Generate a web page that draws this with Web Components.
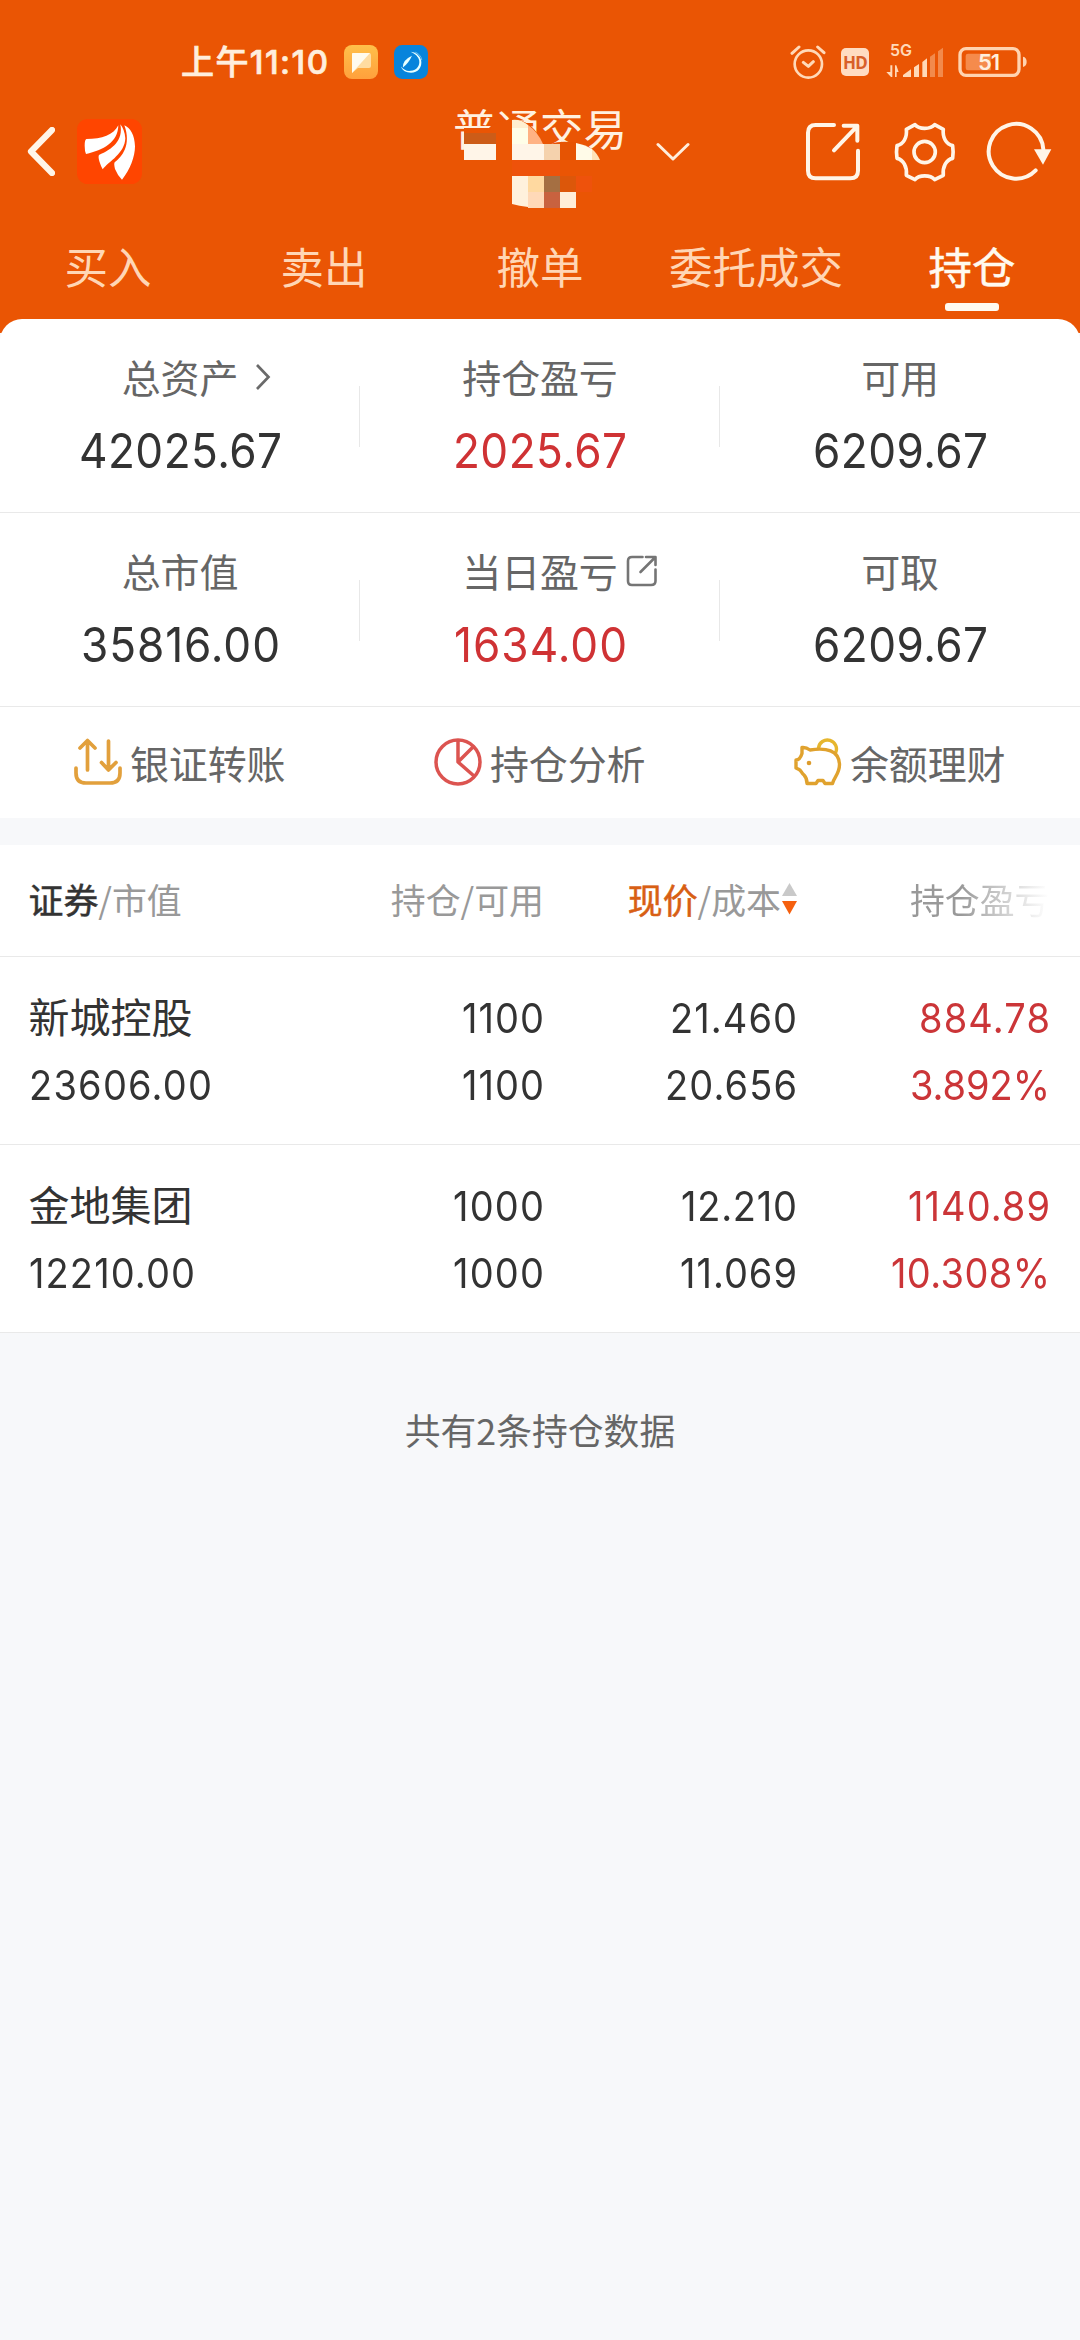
<!DOCTYPE html>
<html lang="zh-CN">
<head>
<meta charset="utf-8">
<title>普通交易 - 持仓</title>
<style>
html,body{margin:0;padding:0}
body{width:1080px;height:2340px;overflow:hidden;background:#f7f8fa;font-family:"Noto Sans CJK SC","Noto Sans",sans-serif;color:#333}
</style>
</head>
<body>
<trade-page></trade-page>
<script>
const ICONS = {
  back: ['0 0 28 49', '<path d="M25 3 4 24.500 25 46" fill="none" stroke="#fff5e8" stroke-width="6.200" stroke-linecap="round" stroke-linejoin="round"/>'],
  logo: ['173 252 195 195', '<rect x="173" y="252" width="195" height="195" rx="32" fill="#ff4500"/><g fill="#fff"><path d="M297 271C283 300 248 312 201 312Q196 314 196 332Q196 348 200 357C252 346 296 322 297 271Z"/><path d="M303 268C313 318 278 343 239 360Q236 364 240 379Q245 395 250 403C270 378 316 356 318 310Q316 284 303 268Z"/><path d="M315 271C337 330 308 366 286 382Q283 386 287 402Q295 422 308 434C332 404 347 366 347 334C346 300 333 279 315 271Z"/></g>'],
  note: ['0 0 34 34', '<defs><linearGradient id="g" x2="0" y2="1"><stop stop-color="#ffc04a"/><stop offset="1" stop-color="#ffa03c"/></linearGradient></defs><rect width="34" height="34" rx="8" fill="url(#g)"/><path d="M9 8H25Q27 8 27 10V21Q27 23 25 23H14L8 28V9Q8 8 9 8Z" fill="#ffdca0"/><path d="M9 8H26L8 28V9Q8 8 9 8Z" fill="#fffbee"/>'],
  swirl: ['1121 29 104 104', '<rect x="1121" y="29" width="104" height="104" rx="25" fill="#0784dc"/><path d="M1172 50Q1196 52 1204 76C1208 98 1194 114 1173 114C1158 114 1147 108 1142 95Q1156 111 1172 108C1191 107 1201 92 1198 76Q1193 59 1172 50Z" fill="#e8ffff"/><path d="M1186 51Q1203 58 1206 75" fill="none" stroke="#a8e0f8" stroke-width="2"/><path d="M1176 62Q1166 85 1148 98Q1147 75 1176 62Z" fill="#e8ffff"/>'],
  chev: ['0 0 34 20', '<path d="M2 2.500 17 17 32 2.500" fill="none" stroke="#ffeedd" stroke-width="3" stroke-linecap="round" stroke-linejoin="round"/>'],
  share: ['134 303 168 183', '<path d="M221 315H166Q143 315 143 338V452Q143 475 166 475H270Q293 475 293 452V392M250 317H291V362M290 319 221 391" fill="none" stroke="#fff5e8" stroke-width="12" stroke-linecap="round" stroke-linejoin="round"/>'],
  gear: ['398 300 190 186', '<g fill="none" stroke="#fff5e8" stroke-width="11" stroke-linejoin="round"><circle cx="493" cy="393" r="32"/><path d="M464 311C476 326 510 326 523 311L549 325C546 350 558 370 577 374Q580 393 577 412C558 416 546 438 549 463L523 476C510 461 476 461 464 476L438 463C441 438 429 416 410 412Q407 393 410 374C429 370 441 350 438 325Z"/></g>'],
  refresh: ['676 303 204 183', '<path d="M828 451A82 82 0 1 1 851 388" fill="none" stroke="#fff5e8" stroke-width="12" stroke-linecap="round"/><path d="M823 388H875L850 434Z" fill="#fff5e8"/>'],
  alarm: ['86 72 108 108', '<g fill="none" stroke="#ffd9b8" stroke-width="8" stroke-linecap="round" stroke-linejoin="round"><circle cx="141" cy="132" r="41"/><path d="M126 127 141 139 156 125M92 100 113 81M169 81 188 98" stroke-width="9"/></g>'],
  signal: ['372 72 180 100', '<g fill="#ffd9b8"><path d="M426 168V162L450 145V168ZM459 168V139L474 129V168ZM484 168V123L498 112V168Z"/><path opacity=".4" d="M507 168V107L522 97V168ZM531 168V91L546 80V168Z"/><path d="M388 133H394V168H390L376 153H388ZM402 168V133H406L413 153H407V168Z"/></g>'],
  battery: ['592 78 210 96', '<rect x="598" y="86" width="177" height="80" rx="18" fill="none" stroke="#ffd3b0" stroke-width="10"/><path d="M787 110Q798 112 798 126Q798 138 787 141Z" fill="#ffd3b0"/><path d="M622 101H690V151H622Q615 151 615 144V108Q615 101 622 101Z" fill="#f58b4c"/>'],
  right: ['0 0 16 30', '<path d="M2 3 13.500 15 2 27" fill="none" stroke="#6a6a6a" stroke-width="2.700"/>'],
  open: ['0 0 32 32', '<path d="M16.500 2H6Q2 2 2 6V26Q2 30 6 30H25Q29.500 30 29.500 26V14.500M20 2H29.500V10M29 2.500 14.500 17" fill="none" stroke="#757575" stroke-width="2.600" stroke-linecap="round" stroke-linejoin="round"/>'],
  transfer: ['0 0 48 48', '<path d="M13.500 32V4M6 10 13.500 2.500 21 10M34.500 3V31M27.500 24.500 34.500 32 42 24.500M2 30V35Q2 45 12 45H36Q46 45 46 35V30" fill="none" stroke="#e2a03c" stroke-width="3.700" stroke-linecap="round" stroke-linejoin="round"/>'],
  pie: ['0 0 48 48', '<g fill="none" stroke="#dc5450" stroke-width="3.500" stroke-linejoin="round"><circle cx="24" cy="24" r="22"/><path d="M24 2V24L40 38M24 24 39 9"/></g>'],
  pig: ['0 0 48 48', '<g fill="none" stroke-width="3.400" stroke-linejoin="round" stroke-linecap="round"><path d="M24.500 10A9 9 0 1 1 41.500 15" stroke="#e6b62e"/><path d="M8 9.500Q12 9 16 12C32 9.500 45 12 45.500 26.500C45.500 36 40 39 38.500 45.500H31L29 42.500H24L22 45.500H13Q13 40 10 37C7 34.500 7 32 5 31.500L2 30V22Q6 22 8 15.500Z" stroke="#e0a22e"/></g><circle cx="15" cy="25" r="2.300" fill="#dd9c2c"/>'],
  sort: ['0 0 15 32', '<path d="M7.500 0 15 13H0Z" fill="#c9c9c9"/><path d="M0 18H15L7.500 31.500Z" fill="#f5600f"/>'],
  mosaic: ['464 118 136 90', '<path d="M464 128H489C494 123 503 120 515 119.500C530 121 538 132 543 144H550Q562 140 576 143Q592 147 600 160V208H464Z" fill="#ea5504"/><path d="M464 133H496V144H464Z" fill="#cc5c18"/><path d="M512 120Q521 119 528 125V128H512Z" fill="#ffefd0"/><path d="M512 128H528V144H512Z" fill="#fffee8"/><path d="M528 125Q538 132 543 144H528Z" fill="#ffb284"/><path d="M464 144H496V160H464ZM512 144H544V160H512Z" fill="#fff5e8"/><path d="M544 144H560V160H544Z" fill="#f5d2ad"/><path d="M560 142H576V160H560Z" fill="#e65403"/><path d="M576 143Q586 145 592 149V160H576Z" fill="#fffbe8"/><path d="M592 149Q597 153 600 160H592Z" fill="#ffe3b8"/><path d="M512 160H560V176H512Z" fill="#ee520a"/><path d="M512 176H528V207Q519 206 512 204Z" fill="#fff1dc"/><path d="M528 176H544V192H528Z" fill="#ffd9a0"/><path d="M544 176H560V192H544Z" fill="#a56f42"/><path d="M560 176H576V192H560Z" fill="#dc570a"/><path d="M576 176H592V192H576Z" fill="#ee520c"/><path d="M528 192H544V208H528Z" fill="#ffd9b8"/><path d="M544 192H560V208H544Z" fill="#c8623f"/><path d="M560 192H576V208H560Z" fill="#ffeed8"/>']
};
const define = (name, html, init) => customElements.define(name, class extends HTMLElement {
  constructor(){ super(); this.attachShadow({mode:'open'}); }
  connectedCallback(){ this.shadowRoot.innerHTML = typeof html === 'function' ? html(this) : html; if (init) init(this); }
});

define('ui-icon', el => {
  const [box, body] = ICONS[el.getAttribute('name')];
  return `<style>:host{display:block;flex:none;width:${el.getAttribute('w')}px;height:${el.getAttribute('h')}px}svg{display:block;width:100%;height:100%}</style><svg viewBox="${box}" preserveAspectRatio="none">${body}</svg>`;
});

/* A single line of slightly condensed figures whose tracking fills the given width. */
define('fit-text', `<style>:host{display:inline-block;white-space:nowrap;text-align:left;font-family:Inter,"Noto Sans CJK SC",sans-serif}span{display:inline-block;transform-origin:0 50%}</style><span><slot></slot></span>`, el => {
  const span = el.shadowRoot.querySelector('span'), w = +el.getAttribute('w'), n = el.textContent.length;
  const k = +(el.getAttribute('k') || .92);
  const s = (w / k - span.getBoundingClientRect().width) / (n - 1);
  span.style.letterSpacing = s + 'px';
  span.style.transform = `scaleX(${k})`;
  el.style.width = w + 'px';
});

define('status-bar', `<style>
:host{display:flex;align-items:center;height:100px;padding:12px 52px 0 181px;color:#ffeedd}
.time{font-size:33px;font-weight:500;line-height:48px;width:147px;white-space:nowrap;-webkit-text-stroke:.7px #ffeedd}
.sp{flex:1}
.hd{box-sizing:border-box;width:28px;height:28px;border-radius:5px;background:#ffdcc2;color:#d8602a;font:700 17px/29px "Noto Sans",sans-serif;text-align:center;letter-spacing:-.8px}
.sig{position:relative}.g5{position:absolute;left:5px;top:-3px;font:600 16px/16px Inter,sans-serif;color:#ffd9b8}
.bat{position:relative}.bat b{position:absolute;left:20px;top:5px;font:600 22px/22px Inter,sans-serif;letter-spacing:-1px;color:#ffeedd}
</style>
<fit-text class="time" w="147" k="1">上午11:10</fit-text>
<ui-icon name="note" w="34" h="34" style="margin-left:16px"></ui-icon>
<ui-icon name="swirl" w="34" h="34" style="margin-left:16px"></ui-icon>
<div class="sp"></div>
<ui-icon name="alarm" w="36" h="36"></ui-icon>
<div class="hd" style="margin-left:15px">HD</div>
<div class="sig" style="margin-left:16px"><ui-icon name="signal" w="60" h="33.300"></ui-icon><span class="g5">5G</span></div>
<div class="bat" style="margin-left:13px"><ui-icon name="battery" w="70" h="32"></ui-icon><b>51</b></div>`);

define('title-bar', `<style>
:host{display:flex;align-items:center;height:79px;padding:0 26px 0 27px}
.title{position:relative;width:174px;height:79px;margin-left:311px;font-size:43.500px;line-height:31px;color:#fff1e0;white-space:nowrap}
.title ui-icon{position:absolute;left:11px;top:6px}
</style>
<ui-icon name="back" w="28" h="49"></ui-icon>
<ui-icon name="logo" w="65" h="65" style="margin-left:22px"></ui-icon>
<div class="title">普通交易<ui-icon name="mosaic" w="136" h="90"></ui-icon></div>
<ui-icon name="chev" w="34" h="20" style="margin-left:29px"></ui-icon>
<ui-icon name="share" w="56" h="61" style="margin-left:114.500px"></ui-icon>
<ui-icon name="gear" w="63.300" h="62" style="margin-left:32px"></ui-icon>
<ui-icon name="refresh" w="68" h="61" style="margin-left:29.500px"></ui-icon>`);

define('nav-tab', `<style>
:host{flex:1;display:flex;flex-direction:column;align-items:center;font-size:43.500px;line-height:60px;color:#ffd6b5;padding-top:45px}
:host([active]){color:#fffaf0;-webkit-text-stroke:.5px #fffaf0}
i{display:none;width:54px;height:8.500px;border-radius:3px;background:#fffaf0;margin-top:6.500px}
:host([active]) i{display:block}
</style><slot></slot><i></i>`);

define('summary-cell', el => `<style>
:host{flex:1;display:flex;flex-direction:column;align-items:center;position:relative}
.l{font-size:39px;line-height:50px;color:#666;padding-top:32px;position:relative;white-space:nowrap;letter-spacing:-.15px}
.l ui-icon{position:absolute}
.v{font-size:48px;line-height:60px;margin-top:20px;color:${el.hasAttribute('up') ? '#cf3234' : '#333'}}
:host(:not(:last-child))::after{content:"";position:absolute;right:0;top:67px;width:1px;height:61px;background:#e8e8e8}
</style><div class="l">${el.getAttribute('label')}${el.getAttribute('icon') === 'right' ? '<ui-icon name="right" w="16" h="30" style="left:133px;top:43px"></ui-icon>' : el.getAttribute('icon') === 'open' ? '<ui-icon name="open" w="32" h="32" style="left:164px;top:42px"></ui-icon>' : ''}</div><fit-text class="v" w="${el.getAttribute('w')}">${el.getAttribute('value')}</fit-text>`);

define('summary-row', `<style>:host{display:flex;box-sizing:border-box;height:194px;border-bottom:1px solid #e9e9e9}</style><slot></slot>`);

define('quick-link', el => `<style>:host{flex:1;display:flex;align-items:center;font-size:39px;line-height:50px;color:#666;letter-spacing:-.15px}.t{margin:-1px 0 0 8px}</style>
<ui-icon name="${el.getAttribute('icon')}" w="48" h="48" style="margin-left:74px"></ui-icon><div class="t"><slot></slot></div>`);

define('table-row', `<style>
:host{display:grid;grid-template-columns:216px 299.500px 253px 252.500px;padding:0 30.500px 0 28.500px;box-sizing:border-box;border-bottom:1px solid #e9e9e9}
::slotted(*){text-align:right}::slotted(:first-child){text-align:left!important}
</style><slot></slot>`);

define('position-cell', el => {
  const [a, wa, b, wb] = el.getAttribute('data').split('|');
  const name = !+wa;
  return `<style>:host{display:block;font-size:41.300px;color:${el.hasAttribute('up') ? '#cb3538' : '#333'}}div{height:67px;line-height:66px;white-space:nowrap}fit-text{line-height:66px;vertical-align:top}.name{font-size:41px;line-height:60px}</style>
<div class="${name ? 'name' : ''}">${name ? a : `<fit-text w="${wa}">${a}</fit-text>`}</div><div><fit-text w="${wb}">${b}</fit-text></div>`;
});

define('trade-page', `<style>
:host{display:block;width:1080px;height:2340px}
header{height:333px;background:#ea5504}
nav{display:flex}
.card{position:relative;margin-top:-14px;background:#fff;border-radius:22px 22px 0 0;height:499px}
.links{display:flex;height:110px}
.table{margin-top:27px;background:#fff}
.head{height:112px;align-items:center;font-size:34.900px;line-height:50px;color:#999;white-space:nowrap;padding-bottom:3px}
.head b{font-weight:400;color:#333;-webkit-text-stroke:.5px #333}
.head .sort{display:flex;justify-content:flex-end;align-items:center;gap:1px}
.sort b{color:#d85f14;-webkit-text-stroke-color:#d85f14}
.fade{color:transparent;background:linear-gradient(90deg,#999 0,#999 164px,#bbb 190px,#eee 235px,#fff 252px);-webkit-background-clip:text;background-clip:text}
.row{height:188px;padding-top:28px}
footer{text-align:center;font-size:35.800px;line-height:50px;color:#666;padding-top:71px}
</style>
<header>
<status-bar></status-bar>
<title-bar></title-bar>
<nav><nav-tab>买入</nav-tab><nav-tab>卖出</nav-tab><nav-tab>撤单</nav-tab><nav-tab>委托成交</nav-tab><nav-tab active>持仓</nav-tab></nav>
</header>
<section class="card">
<summary-row><summary-cell label="总资产" icon="right" value="42025.67" w="203"></summary-cell><summary-cell up label="持仓盈亏" value="2025.67" w="174"></summary-cell><summary-cell label="可用" value="6209.67" w="175"></summary-cell></summary-row>
<summary-row><summary-cell label="总市值" value="35816.00" w="199"></summary-cell><summary-cell up label="当日盈亏" icon="open" value="1634.00" w="173"></summary-cell><summary-cell label="可取" value="6209.67" w="175"></summary-cell></summary-row>
<div class="links"><quick-link icon="transfer">银证转账</quick-link><quick-link icon="pie">持仓分析</quick-link><quick-link icon="pig">余额理财</quick-link></div>
</section>
<section class="table">
<table-row class="head"><div><b>证券</b>/市值</div><div>持仓/可用</div><div class="sort"><span><b>现价</b>/成本</span><ui-icon name="sort" w="15" h="32"></ui-icon></div><div class="fade">持仓盈亏</div></table-row>
<table-row class="row"><position-cell data="新城控股|0|23606.00|183"></position-cell><position-cell data="1100|82|1100|82"></position-cell><position-cell data="21.460|127|20.656|132"></position-cell><position-cell up data="884.78|131|3.892%|140"></position-cell></table-row>
<table-row class="row"><position-cell data="金地集团|0|12210.00|166"></position-cell><position-cell data="1000|91|1000|91"></position-cell><position-cell data="12.210|116|11.069|117"></position-cell><position-cell up data="1140.89|142|10.308%|159"></position-cell></table-row>
</section>
<footer>共有2条持仓数据</footer>`);
</script>
</body>
</html>
